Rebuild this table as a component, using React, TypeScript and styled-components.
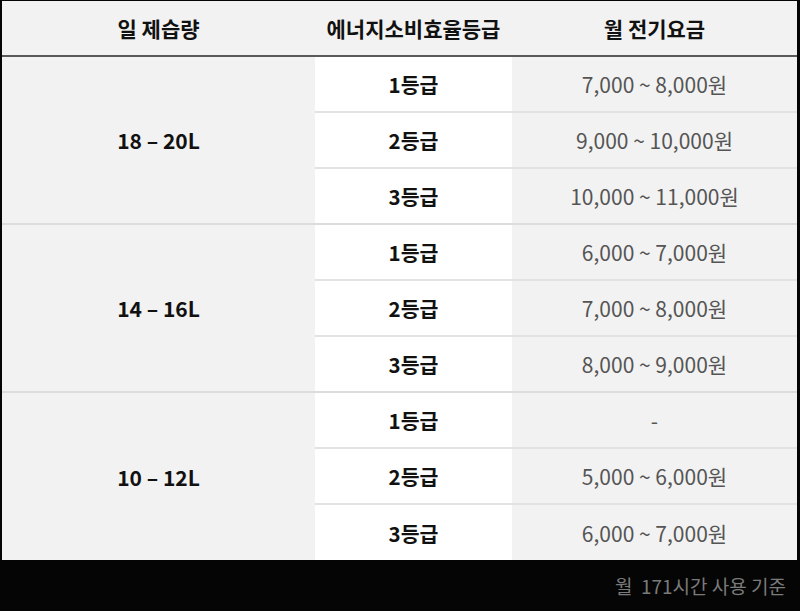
import React from 'react'
import styled, { createGlobalStyle } from 'styled-components'

const GlobalStyle = createGlobalStyle`
  html, body {
    margin: 0;
    padding: 0;
    background: #050505;
  }
  body {
    font-family: "Noto Sans CJK KR", "Noto Sans", sans-serif;
  }
`

const Page = styled.div`
  width: 800px;
  height: 611px;
  display: flex;
  flex-direction: column;
  background: #050505;
  padding: 1px 3px 0 2px;
  box-sizing: border-box;
`

const Table = styled.table`
  width: 100%;
  border-collapse: collapse;
  table-layout: fixed;
  background: #f2f2f2;
`

const HeadCell = styled.th`
  height: 54px;
  padding: 0;
  font-size: 21px;
  font-weight: 700;
  color: #111;
  text-align: center;
  background: #f2f2f2;
  border-bottom: 2px solid #5a5a5a;
`

const Cell = styled.td<{ $kind: 'size' | 'grade' | 'price'; $groupEnd?: boolean }>`
  height: 54px;
  padding: 0;
  text-align: center;
  border-bottom: 2px solid ${p => (p.$kind === 'size' || p.$groupEnd ? '#dcdcdc' : '#e2e2e2')};
  background: ${p => (p.$kind === 'grade' ? '#ffffff' : '#f2f2f2')};
  color: ${p => (p.$kind === 'price' ? '#555' : '#111')};
  font-weight: ${p => (p.$kind === 'price' ? 400 : 700)};
  font-size: ${p => (p.$kind === 'grade' ? '20.5px' : '21px')};
`

const LastRow = styled.tr`
  & > td {
    border-bottom: none;
    height: 55px;
  }
`

const Footer = styled.div`
  flex: 1;
  display: flex;
  align-items: center;
  justify-content: flex-end;
  padding-right: 11px;
  color: #7a7a7a;
  font-size: 19px;
`

type Group = { size: string; rows: { grade: string; price: string }[] }

const groups: Group[] = [
  {
    size: '18 – 20L',
    rows: [
      { grade: '1등급', price: '7,000 ~ 8,000원' },
      { grade: '2등급', price: '9,000 ~ 10,000원' },
      { grade: '3등급', price: '10,000 ~ 11,000원' },
    ],
  },
  {
    size: '14 – 16L',
    rows: [
      { grade: '1등급', price: '6,000 ~ 7,000원' },
      { grade: '2등급', price: '7,000 ~ 8,000원' },
      { grade: '3등급', price: '8,000 ~ 9,000원' },
    ],
  },
  {
    size: '10 – 12L',
    rows: [
      { grade: '1등급', price: '-' },
      { grade: '2등급', price: '5,000 ~ 6,000원' },
      { grade: '3등급', price: '6,000 ~ 7,000원' },
    ],
  },
]

export default function App() {
  return (
    <Page>
      <GlobalStyle />
      <Table>
        <colgroup>
          <col style={{ width: 313 }} />
          <col style={{ width: 197 }} />
          <col />
        </colgroup>
        <thead>
          <tr>
            <HeadCell>일 제습량</HeadCell>
            <HeadCell>에너지소비효율등급</HeadCell>
            <HeadCell>월 전기요금</HeadCell>
          </tr>
        </thead>
        <tbody>
          {groups.map((g, gi) =>
            g.rows.map((r, ri) => {
              const lastGroup = gi === groups.length - 1
              const isLast = lastGroup && ri === g.rows.length - 1
              const Row = isLast ? LastRow : 'tr'
              const groupEnd = ri === g.rows.length - 1
              return (
                <Row key={`${gi}-${ri}`}>
                  {ri === 0 && (
                    <Cell
                      $kind="size"
                      rowSpan={g.rows.length}
                      style={lastGroup ? { borderBottom: 'none' } : undefined}
                    >
                      {g.size}
                    </Cell>
                  )}
                  <Cell $kind="grade" $groupEnd={groupEnd}>{r.grade}</Cell>
                  <Cell $kind="price" $groupEnd={groupEnd}>{r.price}</Cell>
                </Row>
              )
            })
          )}
        </tbody>
      </Table>
      <Footer>월&nbsp;&nbsp;171시간 사용 기준</Footer>
    </Page>
  )
}
